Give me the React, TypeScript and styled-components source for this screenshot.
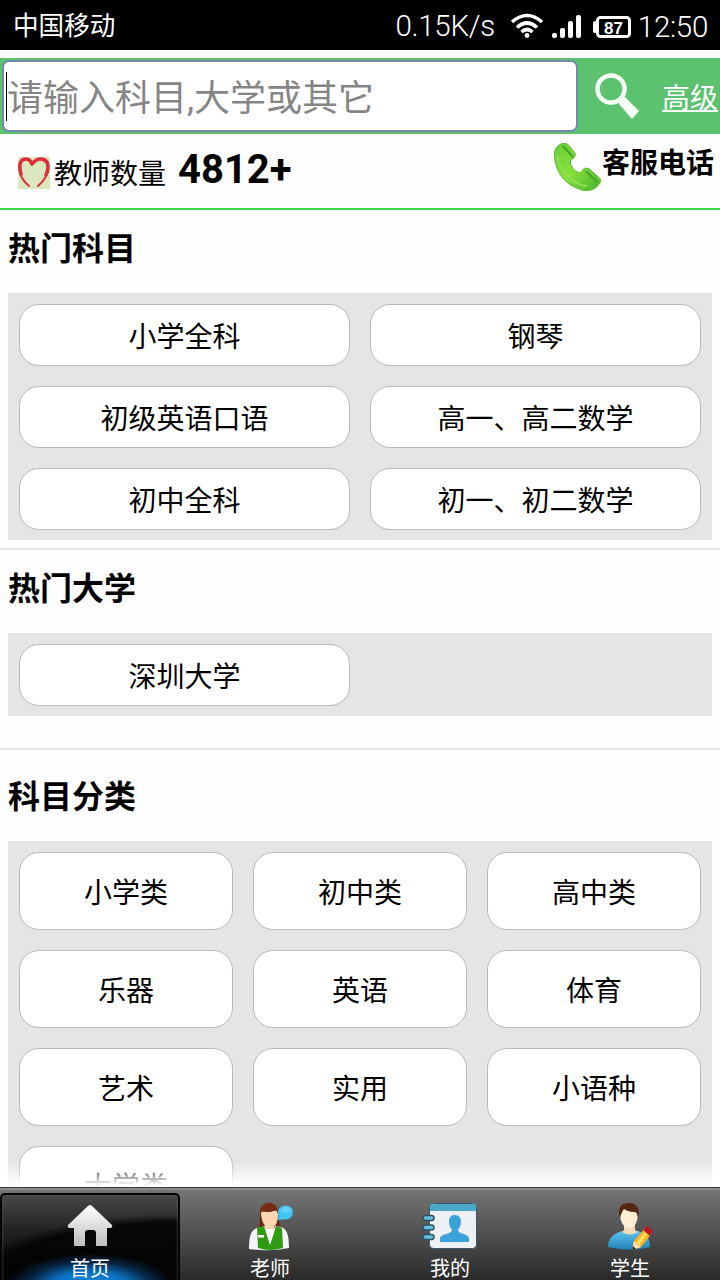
import React from "react";
import styled, { createGlobalStyle } from "styled-components";

const Global = createGlobalStyle`
  * { box-sizing: border-box; }
  html, body { margin: 0; padding: 0; background: #fff; }
  body { font-family: Roboto, "Noto Sans CJK SC", sans-serif; color: #000; overflow: hidden; }
  button { font-family: inherit; color: inherit; margin: 0; padding: 0; }
`;

const Screen = styled.div`
  width: 720px;
  height: 1280px;
  display: flex;
  flex-direction: column;
  overflow: hidden;
  background: #fefefe;
`;

const StatusBar = styled.header`
  flex: none;
  height: 50px;
  padding: 0 12px 0 13px;
  background: #000;
  color: #fff;
  display: flex;
  align-items: center;
`;

const Carrier = styled.span`
  flex: 1;
  font-size: 25.6px;
  line-height: 50px;
  padding-top: 1px;
`;

const StatusText = styled.span<{ $top: number }>`
  font-size: 29.500px;
  font-weight: 300;
  line-height: 50px;
  padding-top: ${(p) => p.$top}px;
  letter-spacing: -0.3px;
`;

const StatusIcons = styled.svg`
  display: block;
  margin: 0 5px 0 16px;
`;

const Content = styled.main`
  position: relative;
  flex: 1;
  min-height: 0;
  overflow: hidden;
  padding-top: 8px;
`;

const BottomFade = styled.div`
  position: absolute;
  left: 0;
  right: 0;
  bottom: 0;
  height: 26px;
  background: linear-gradient(rgba(255, 255, 255, 0), rgba(255, 255, 255, 0.95) 90%, #fff);
`;

const SearchBar = styled.div`
  height: 76px;
  background: #5cc26f;
  display: flex;
  align-items: flex-start;
  padding: 2px 2px 0 2px;
`;

const SearchField = styled.div`
  width: 576px;
  height: 72px;
  border: 2px solid #7688ad;
  border-radius: 7px;
  background: #fff;
  display: flex;
  align-items: center;
  padding-left: 2px;
`;

const Caret = styled.span`
  width: 1px;
  height: 49px;
  background: #000;
`;

const Placeholder = styled.span`
  font-size: 36px;
  line-height: 62px;
  padding-top: 6px;
  color: #858585;
  white-space: nowrap;
`;

const SearchIcon = styled.svg`
  margin: 10px 0 0 14px;
  display: block;
`;

const AdvancedLink = styled.a`
  margin-left: auto;
  font-size: 28px;
  line-height: 78px;
  height: 74px;
  color: #fff;
  text-decoration: underline;
  text-decoration-thickness: 2px;
  text-underline-offset: 2px;
  white-space: nowrap;
`;

const InfoRow = styled.div`
  height: 76px;
  border-bottom: 2px solid #3fd64a;
  display: flex;
  padding: 0 6px 0 17px;
`;

const HeartIcon = styled.svg`
  margin: 22px 4px 0 0;
`;

const CountLabel = styled.span`
  font-size: 28px;
  line-height: 81px;
  height: 74px;
`;

const CountValue = styled.strong`
  margin-left: 12px;
  font-size: 40px;
  font-weight: 700;
  line-height: 72px;
`;

const PhoneIcon = styled.svg`
  margin: 8px 0 0 auto;
`;

const HotlineLabel = styled.strong`
  font-size: 28px;
  line-height: 59px;
  font-weight: 700;
`;

const Section = styled.section<{ $top: number; $bottom: number; $rule?: boolean }>`
  padding: ${(p) => p.$top}px 8px ${(p) => p.$bottom}px;
  border-bottom: ${(p) => (p.$rule ? "2px solid #e4e4e4" : "0")};
`;

const Heading = styled.h2`
  margin: 0;
  height: 83px;
  font-size: 32px;
  line-height: 78px;
  font-weight: 700;
`;

const Panel = styled.div<{ $columns: number; $row: number; $bottom: number }>`
  display: grid;
  grid-template-columns: repeat(${(p) => p.$columns}, 1fr);
  grid-auto-rows: ${(p) => p.$row}px;
  gap: 20px;
  padding: 11px 11px ${(p) => p.$bottom}px;
  background: #e5e5e5;
`;

const Choice = styled.button`
  border: 1px solid #b9b9b9;
  border-radius: 20px;
  background: #fff;
  font-size: 28px;
  line-height: 40px;
  padding-top: 6px;
`;

const TabBar = styled.nav`
  flex: none;
  height: 93px;
  display: grid;
  grid-template-columns: repeat(4, 1fr);
  border-top: 1px solid #3a3a3a;
  box-shadow: inset 0 2px 0 #8b8b8b;
  background: linear-gradient(#767676, #505050 50%, #292929);
  padding-top: 5px;
`;

const Tab = styled.div<{ $active?: boolean }>`
  color: #fff;
  display: flex;
  flex-direction: column;
  align-items: center;
  padding-top: ${(p) => (p.$active ? 7 : 9)}px;
  border: ${(p) => (p.$active ? "2px solid #050505" : "0")};
  border-bottom: 0;
  border-radius: 5px 5px 0 0;
  box-shadow: ${(p) => (p.$active ? "inset 0 0 3px #5a5a5a" : "none")};
  background: ${(p) =>
    p.$active
      ? "radial-gradient(ellipse 84px 33px at 50% 104%, #128fe6 0%, #0c70c0 45%, rgba(6,50,90,.7) 75%, transparent 100%), radial-gradient(ellipse 215px 69px at 100% 100%, rgba(2,2,2,.85) 88%, transparent 99%), linear-gradient(#484848, #262626 35%, #0a0a0a 75%)"
      : "none"};
`;

const TabIcon = styled.svg`
  display: block;
  flex: none;
`;

const TabLabel = styled.span`
  font-size: 20px;
  line-height: 28px;
  margin-top: 3px;
`;

const subjects = ["小学全科", "钢琴", "初级英语口语", "高一、高二数学", "初中全科", "初一、初二数学"];
const universities = ["深圳大学"];
const categories = ["小学类", "初中类", "高中类", "乐器", "英语", "体育", "艺术", "实用", "小语种", "大学类"];

const HomeIcon = () => (
  <TabIcon width="60" height="50" viewBox="0 0 60 50">
    <defs>
      <linearGradient id="home" x1="0" y1="0" x2="0" y2="1">
        <stop offset="0" stopColor="#fff" />
        <stop offset="1" stopColor="#bdbdbd" />
      </linearGradient>
    </defs>
    <path
      d="M28 4q2-2 4 0l20 19q1 3-2 3h-3v18H36V31q0-3-3-3h-5q-3 0-3 3v13H14V26h-4q-3 0-2-3z"
      fill="url(#home)"
    />
  </TabIcon>
);

const TeacherIcon = () => (
  <TabIcon width="60" height="50" viewBox="0 0 60 50">
    <path d="M20 26c-2-2 0-5 0-12C20 5 24 1 29 1c7 0 9 5 9 12 0 7 4 10 2 13-5 2-16 2-20 0z" fill="#6f2812" />
    <path d="M25 20h9v6l3 2-7 18-9-18 4-2z" fill="#f8cba8" />
    <path d="M9 47c0-13 2-19 8-21l8-2 5 15 5-15 6 1c6 2 8 8 8 21q-19 4-40 1z" fill="#f6f4f8" />
    <path d="M17 26l7-2 6 19 6-19 6 2 1 20q-13 4-25 0z" fill="#2f9b13" />
    <path d="M26 27l4 15 5-15z" fill="#fff" />
    <path d="M21 9c6 2 11 1 15-1l2 4c0 9-3 14-8 14s-9-6-9-17z" fill="#ffd6b4" />
    <path d="M20 11c0-7 4-10 9-10 6 0 8 4 8 8-6-1-8-1-11 0-3 0-5 1-6 2z" fill="#782c14" />
    <path d="M18 33h6v2.500h-6z" fill="#fff" />
    <ellipse cx="45.500" cy="10.500" rx="7.500" ry="7" fill="#41c4f5" />
    <path d="M38 18l1-8 8 6q-4 2-9 2z" fill="#41c4f5" />
    <ellipse cx="46" cy="8" rx="5" ry="3" fill="#62d0f8" />
  </TabIcon>
);

const ContactsIcon = () => (
  <TabIcon width="60" height="50" viewBox="0 0 60 50">
    <rect x="9.500" y="1.500" width="47" height="45" rx="4" fill="#eef0f3" stroke="#365b6b" />
    <path d="M10 9V5q0-3 3-3h40q3 0 3 3v4z" fill="#4ba9c7" />
    <g fill="#69bfe0" stroke="#2d5260" strokeWidth="1.500">
      <rect x="3" y="13.500" width="11" height="5" rx="2.500" />
      <rect x="3" y="23" width="11" height="5" rx="2.500" />
      <rect x="3" y="32.500" width="11" height="5" rx="2.500" />
    </g>
    <path d="M29 20c0-5 2-7 6-7s6 3 6 7c0 4-2 6-3 8 0 4 11 4 11 8v4H20v-4c0-4 12-4 12-8-1-2-3-4-3-8z" fill="#3ba2da" />
  </TabIcon>
);

const StudentIcon = () => (
  <TabIcon width="60" height="50" viewBox="0 0 60 50">
    <defs>
      <linearGradient id="shirt" x1="0" y1="0" x2="0" y2="1">
        <stop offset="0" stopColor="#63c4ef" />
        <stop offset="1" stopColor="#1c82b8" />
      </linearGradient>
    </defs>
    <path d="M8 45c0-9 5-13 14-16h16c8 3 12 7 12 16q-19 5-42 0z" fill="url(#shirt)" />
    <path d="M24 21h11v7l3 2q-8 5-16 0l2-2z" fill="#f3dab8" />
    <path d="M20 11c2-7 16-8 18 0 0 8-3 15-9 15s-9-7-9-15z" fill="#ffeed3" />
    <path d="M20 16c-3-10 1-15 9-15 7 0 12 5 9 15-1-4-1-6-4-6-5 0-8-2-10-3-2 3-3 5-4 9z" fill="#572715" />
    <path d="M34 39L45 26l7 5-11 14-9 3z" fill="#ffb41f" />
    <path d="M36 41L47 28l2 2-10 13z" fill="#ffe064" />
    <path d="M43 28l4-4 6 5-3 5z" fill="#b91726" />
    <path d="M34 39l7 6-9 3z" fill="#ffe0a8" />
    <path d="M33 44l3 3-4 1z" fill="#222" />
  </TabIcon>
);

const tabs = [
  { label: "首页", icon: <HomeIcon />, active: true },
  { label: "老师", icon: <TeacherIcon /> },
  { label: "我的", icon: <ContactsIcon /> },
  { label: "学生", icon: <StudentIcon /> },
];

const App: React.FC = () => (
  <>
    <Global />
    <Screen>
      <StatusBar>
        <Carrier>中国移动</Carrier>
        <StatusText $top={2}>0.15K/s</StatusText>
        <StatusIcons width="122" height="50" viewBox="0 0 122 50">
          <g fill="none" stroke="#fff" strokeWidth="3.600">
            <path d="M1 22Q16 9 31 22" />
            <path d="M6 27.500Q16 18.500 26 27.500" />
            <path d="M10.500 32Q16 27 21.500 32" />
          </g>
          <circle cx="16" cy="35.500" r="2.400" fill="#fff" />
          <g fill="#fff">
            <rect x="41" y="33" width="5" height="5" rx="2" />
            <rect x="49" y="28" width="5" height="10" rx="2" />
            <rect x="57" y="21" width="5" height="17" rx="2" />
            <rect x="65" y="15" width="5" height="23" rx="2" />
            <rect x="82" y="21" width="5" height="12" rx="2" />
          </g>
          <rect x="86.500" y="17.500" width="32" height="19" rx="3" fill="none" stroke="#fff" strokeWidth="3" />
          <text x="102.500" y="33.500" textAnchor="middle" fontFamily="Liberation Sans, sans-serif" fontSize="17" fontWeight="700" fill="#fff">
            87
          </text>
        </StatusIcons>
        <StatusText $top={4}>12:50</StatusText>
      </StatusBar>

      <Content>
        <SearchBar>
          <SearchField>
            <Caret />
            <Placeholder>请输入科目,大学或其它</Placeholder>
          </SearchField>
          <SearchIcon width="54" height="52" viewBox="0 0 54 52">
            <circle cx="19" cy="19" r="13.500" fill="none" stroke="#f5fff5" strokeWidth="4.500" />
            <path d="M27 30l5-4 15 15-7 8-13-15z" fill="#f5fff5" />
          </SearchIcon>
          <AdvancedLink>高级</AdvancedLink>
        </SearchBar>

        <InfoRow>
          <HeartIcon width="33" height="34" viewBox="0 0 33 34">
            <rect x="1" y="1" width="32" height="32" fill="#dbe8bd" />
            <g fill="none" stroke="#d9303a" strokeLinecap="round" strokeLinejoin="round">
              <path d="M12 30C7 26 2.500 20 2.500 12C3 2 12 1 15 8C21 0 31 2 31 11C31 19 27 25 21 30" strokeWidth="2" />
              <path d="M4 18C1 7 4 3 9 3Q13 3 15 8C21 0 31 2 31 11Q31 15 29 19" strokeWidth="3.600" />
            </g>
          </HeartIcon>
          <CountLabel>教师数量</CountLabel>
          <CountValue>4812+</CountValue>
          <PhoneIcon width="50" height="50" viewBox="0 0 50 50">
            <defs>
              <linearGradient id="phone" x1="0" y1="0" x2="1" y2="1">
                <stop offset="0" stopColor="#67cf36" />
                <stop offset=".5" stopColor="#86df3c" />
                <stop offset="1" stopColor="#46b42d" />
              </linearGradient>
            </defs>
            <path
              transform="translate(1.5 0)"
              d="M1 10Q3 3 9 1.500Q13 0 16 4L22 12Q22 16 17 18Q16 22 19 26Q22 30 26 31Q28 30 30 27Q32 25 36 27L47 37Q48 41 43 45Q39 49 31 48.500Q21 47 12 39Q0 27 1 10z"
              fill="url(#phone)"
              stroke="#5dbd35"
            />
            <path d="M11 4L21 15M34 29L45 40" stroke="#43a329" strokeWidth="2.200" fill="none" />
            <path d="M5 13Q6 24 16 34T35 44" stroke="#93e04c" strokeWidth="2" fill="none" />
          </PhoneIcon>
          <HotlineLabel>客服电话</HotlineLabel>
        </InfoRow>

        <Section $top={0} $bottom={8} $rule>
          <Heading>热门科目</Heading>
          <Panel $columns={2} $row={62} $bottom={10}>
            {subjects.map((s) => (
              <Choice key={s}>{s}</Choice>
            ))}
          </Panel>
        </Section>

        <Section $top={0} $bottom={32} $rule>
          <Heading>热门大学</Heading>
          <Panel $columns={2} $row={62} $bottom={10}>
            {universities.map((s) => (
              <Choice key={s}>{s}</Choice>
            ))}
          </Panel>
        </Section>

        <Section $top={8} $bottom={0}>
          <Heading>科目分类</Heading>
          <Panel $columns={3} $row={78} $bottom={11}>
            {categories.map((s) => (
              <Choice key={s}>{s}</Choice>
            ))}
          </Panel>
        </Section>
        <BottomFade />
      </Content>

      <TabBar>
        {tabs.map((t) => (
          <Tab key={t.label} $active={t.active}>
            {t.icon}
            <TabLabel>{t.label}</TabLabel>
          </Tab>
        ))}
      </TabBar>
    </Screen>
  </>
);

export default App;
